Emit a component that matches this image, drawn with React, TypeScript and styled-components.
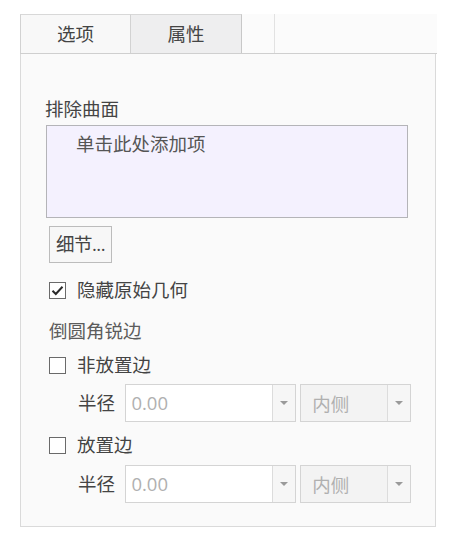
import styled, { createGlobalStyle } from 'styled-components'

const GlobalStyle = createGlobalStyle`
  html, body {
    margin: 0;
    padding: 0;
    background: #ffffff;
  }
  body {
    font-family: 'Open Sans', 'Noto Sans CJK SC', sans-serif;
    color: #444444;
  }
`

const Wrap = styled.div`
  padding: 14px 0 0 20px;
  width: 417px;
`

const TabBar = styled.div`
  display: flex;
  height: 39px;
  border-bottom: 1px solid #cfcfcf;
  background: #fbfbfb;
`

const Tab = styled.div<{ $active?: boolean; $width: number }>`
  width: ${({ $width }) => $width}px;
  box-sizing: border-box;
  display: flex;
  align-items: center;
  justify-content: center;
  font-size: 18.5px;
  line-height: 26px;
  color: #444444;
  border-top: 1px solid #d8d8d8;
  border-left: 1px solid #d2d2d2;
  background: ${({ $active }) => ($active ? '#f8f8f8' : '#eeeeef')};
  &:nth-child(2) { border-right: 1px solid #c8c8c8; }
`

const TabGap = styled.div`
  width: 32px;
  border-right: 1px solid #e2e2e2;
`

const Panel = styled.div`
  width: 416px;
  box-sizing: border-box;
  border: 1px solid #dadada;
  border-top: none;
  background: #fafafa;
  padding: 42px 24px 23px 24px;
`

const Label = styled.div<{ $dim?: boolean }>`
  font-size: 18.5px;
  line-height: 26px;
  color: ${({ $dim }) => ($dim ? '#5c5c5c' : '#444444')};
`

const ListBox = styled.div`
  margin: 3px 0 0 1px;
  width: 362px;
  height: 93px;
  box-sizing: border-box;
  border: 1px solid #b4b4b8;
  background: #f4f1fe;
  padding: 5px 0 0 29px;
  font-size: 18.5px;
  line-height: 26px;
  color: #555555;
`

const DetailButton = styled.button`
  margin: 8px 0 0 4px;
  width: 63px;
  height: 37px;
  box-sizing: border-box;
  border: 1px solid #bcbcbc;
  background: #f7f7f7;
  font-family: 'Open Sans', 'Noto Sans CJK SC', sans-serif;
  font-size: 18.5px;
  line-height: 26px;
  color: #444444;
  padding: 0 0 2px 0;
  display: flex;
  align-items: center;
  justify-content: center;
  white-space: nowrap;
  letter-spacing: -0.5px;
`

const CheckRow = styled.label<{ $top: number }>`
  margin: ${({ $top }) => $top}px 0 0 4px;
  display: flex;
  align-items: center;
  gap: 11px;
  height: 26px;
  font-size: 18.5px;
  line-height: 26px;
  color: #444444;
`

const Box = styled.span`
  width: 17px;
  height: 17px;
  box-sizing: border-box;
  border: 1px solid #6a6a6a;
  background: #ffffff;
  display: flex;
  align-items: center;
  justify-content: center;
  flex: none;
`

const SectionLabel = styled(Label)<{ $top: number }>`
  margin-top: ${({ $top }) => $top}px;
  margin-left: 4px;
`

const FieldRow = styled.div<{ $top: number }>`
  margin: ${({ $top }) => $top}px 0 0 33px;
  display: flex;
  align-items: center;
  height: 38px;
`

const FieldLabel = styled.span`
  width: 48px;
  font-size: 18.5px;
  line-height: 26px;
  color: #444444;
`

const Combo = styled.div<{ $width: number; $disabled?: boolean }>`
  width: ${({ $width }) => $width}px;
  height: 38px;
  box-sizing: border-box;
  border: 1px solid #d4d4d4;
  background: ${({ $disabled }) => ($disabled ? '#f3f3f3' : '#ffffff')};
  display: flex;
  align-items: stretch;
  & + & { margin-left: 4px; }
`

const ComboText = styled.span<{ $pad: number }>`
  flex: 1;
  display: flex;
  align-items: center;
  padding-left: ${({ $pad }) => $pad}px;
  font-size: 18.5px;
  color: #b0b0b0;
  padding-bottom: 1px;
`

const Arrow = styled.span`
  width: 22px;
  border-left: 1px solid #dcdcdc;
  background: #f6f6f6;
  display: flex;
  align-items: center;
  justify-content: center;
  &::after {
    content: '';
    border-left: 4px solid transparent;
    border-right: 4px solid transparent;
    border-top: 4px solid #9a9a9a;
  }
`

function Check({ checked }: { checked?: boolean }) {
  return (
    <Box>
      {checked && (
        <svg width="13" height="11" viewBox="0 0 13 11">
          <path d="M1.5 5.8 L4.8 9 L11.5 1.8" fill="none" stroke="#2b2b2b" strokeWidth="2" />
        </svg>
      )}
    </Box>
  )
}

function RadiusRow({ top }: { top: number }) {
  return (
    <FieldRow $top={top}>
      <FieldLabel>半径</FieldLabel>
      <Combo $width={173}>
        <ComboText $pad={5}>0.00</ComboText>
        <Arrow />
      </Combo>
      <Combo $width={112} $disabled>
        <ComboText $pad={11}>内侧</ComboText>
        <Arrow />
      </Combo>
    </FieldRow>
  )
}

export default function App() {
  return (
    <Wrap>
      <GlobalStyle />
      <TabBar>
        <Tab $active $width={110}>选项</Tab>
        <Tab $width={112}>属性</Tab>
        <TabGap />
      </TabBar>
      <Panel>
        <Label>排除曲面</Label>
        <ListBox>单击此处添加项</ListBox>
        <DetailButton>细节...</DetailButton>
        <CheckRow $top={14}>
          <Check checked />
          隐藏原始几何
        </CheckRow>
        <SectionLabel $dim $top={15}>倒圆角锐边</SectionLabel>
        <CheckRow $top={8}>
          <Check />
          非放置边
        </CheckRow>
        <RadiusRow top={6} />
        <CheckRow $top={10}>
          <Check />
          放置边
        </CheckRow>
        <RadiusRow top={7} />
      </Panel>
    </Wrap>
  )
}
